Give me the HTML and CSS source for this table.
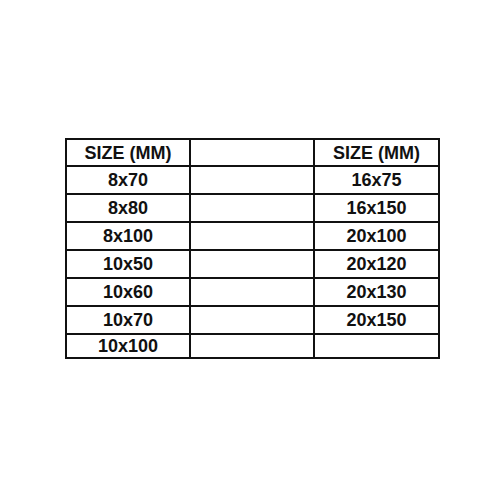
FILE: index.html
```html
<!DOCTYPE html>
<html>
<head>
<meta charset="utf-8">
<link rel="stylesheet" href="styles.css">
</head>
<body>
<div class="page">
<table class="sizes">
  <colgroup>
    <col class="c1"><col class="c2"><col class="c3">
  </colgroup>
  <tr class="r-head"><td>SIZE (MM)</td><td></td><td>SIZE (MM)</td></tr>
  <tr><td>8x70</td><td></td><td>16x75</td></tr>
  <tr><td>8x80</td><td></td><td>16x150</td></tr>
  <tr><td>8x100</td><td></td><td>20x100</td></tr>
  <tr><td>10x50</td><td></td><td>20x120</td></tr>
  <tr><td>10x60</td><td></td><td>20x130</td></tr>
  <tr><td>10x70</td><td></td><td>20x150</td></tr>
  <tr class="r-last"><td>10x100</td><td></td><td></td></tr>
</table>
</div>
</body>
</html>
```
FILE: styles.css
```css
html, body {
  margin: 0;
  padding: 0;
  background: #fff;
}
.page {
  width: 500px;
  height: 500px;
  padding: 138px 0 0 65px;
  box-sizing: border-box;
}
.sizes {
  border-collapse: separate;
  border-spacing: 0;
  table-layout: fixed;
  width: 375px;
  border-top: 2px solid #111;
  border-left: 2px solid #111;
  font-family: "Liberation Sans", Arial, sans-serif;
  font-weight: bold;
  font-size: 18px;
  color: #111;
}
.c1 { width: 124px; }
.c2 { width: 124px; }
.c3 { width: 125px; }
.sizes td {
  border-right: 2px solid #111;
  border-bottom: 2px solid #111;
  padding: 0;
  text-align: center;
  vertical-align: middle;
  line-height: 20px;
  height: 28px;
  box-sizing: border-box;
}
.sizes .r-head td { height: 27px; }
.sizes .r-last td { height: 24px; }
```
